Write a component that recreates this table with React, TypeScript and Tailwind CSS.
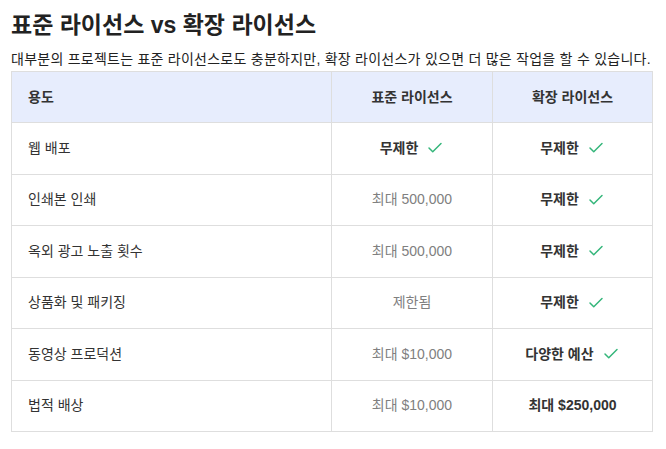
import { Check } from "lucide-react";

type Cell = { text: string; bold?: boolean; check?: boolean };

const rows: { use: string; std: Cell; ext: Cell }[] = [
  { use: "웹 배포", std: { text: "무제한", bold: true, check: true }, ext: { text: "무제한", bold: true, check: true } },
  { use: "인쇄본 인쇄", std: { text: "최대 500,000" }, ext: { text: "무제한", bold: true, check: true } },
  { use: "옥외 광고 노출 횟수", std: { text: "최대 500,000" }, ext: { text: "무제한", bold: true, check: true } },
  { use: "상품화 및 패키징", std: { text: "제한됨" }, ext: { text: "무제한", bold: true, check: true } },
  { use: "동영상 프로덕션", std: { text: "최대 $10,000" }, ext: { text: "다양한 예산", bold: true, check: true } },
  { use: "법적 배상", std: { text: "최대 $10,000" }, ext: { text: "최대 $250,000", bold: true } },
];

const ValueCell = ({ cell }: { cell: Cell }) => (
  <td className="border border-[#dedede] text-center">
    <span
      className={
        cell.bold
          ? "inline-flex items-center gap-2 font-bold text-[#333]"
          : "inline-flex items-center text-[#808080]"
      }
    >
      {cell.text}
      {cell.check && <Check className="h-[18px] w-[18px] text-[#34b67a]" strokeWidth={2} />}
    </span>
  </td>
);

export default function App() {
  return (
    <div
      className="min-h-screen bg-white px-[11px] pt-[9px] text-[#333]"
      style={{ fontFamily: '"Liberation Sans", "Noto Sans CJK KR", sans-serif' }}
    >
      <h1 className="text-[23px] font-bold leading-[32px] text-[#222]">표준 라이선스 vs 확장 라이선스</h1>
      <p className="mt-[9px] whitespace-nowrap text-[14px] leading-[18px] tracking-[0.25px] text-[#222]">
        대부분의 프로젝트는 표준 라이선스로도 충분하지만, 확장 라이선스가 있으면 더 많은 작업을 할 수 있습니다.
      </p>
      <table className="mt-[3px] w-[641px] table-fixed border-collapse text-[14px]">
        <colgroup>
          <col className="w-[320px]" />
          <col className="w-[161px]" />
          <col className="w-[160px]" />
        </colgroup>
        <thead>
          <tr className="h-[51px] bg-[#e7edfd]">
            <th className="border border-[#dedede] pl-4 text-left font-bold">용도</th>
            <th className="border border-[#dedede] text-center font-bold">표준 라이선스</th>
            <th className="border border-[#dedede] text-center font-bold">확장 라이선스</th>
          </tr>
        </thead>
        <tbody>
          {rows.map((r) => (
            <tr key={r.use} className="h-[51.5px]">
              <td className="border border-[#dedede] pl-4 text-[#333]">{r.use}</td>
              <ValueCell cell={r.std} />
              <ValueCell cell={r.ext} />
            </tr>
          ))}
        </tbody>
      </table>
    </div>
  );
}
